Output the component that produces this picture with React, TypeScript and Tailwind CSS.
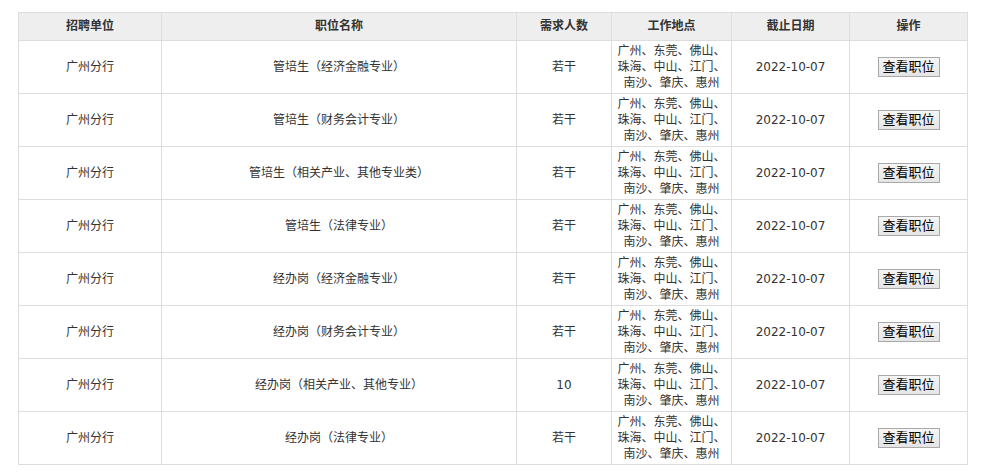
import React from 'react'

type Job = { unit: string; name: string; count: string; place: string; date: string }

const place = '广州、东莞、佛山、珠海、中山、江门、南沙、肇庆、惠州'

const jobs: Job[] = [
  { unit: '广州分行', name: '管培生（经济金融专业）', count: '若干', place, date: '2022-10-07' },
  { unit: '广州分行', name: '管培生（财务会计专业）', count: '若干', place, date: '2022-10-07' },
  { unit: '广州分行', name: '管培生（相关产业、其他专业类）', count: '若干', place, date: '2022-10-07' },
  { unit: '广州分行', name: '管培生（法律专业）', count: '若干', place, date: '2022-10-07' },
  { unit: '广州分行', name: '经办岗（经济金融专业）', count: '若干', place, date: '2022-10-07' },
  { unit: '广州分行', name: '经办岗（财务会计专业）', count: '若干', place, date: '2022-10-07' },
  { unit: '广州分行', name: '经办岗（相关产业、其他专业）', count: '10', place, date: '2022-10-07' },
  { unit: '广州分行', name: '经办岗（法律专业）', count: '若干', place, date: '2022-10-07' },
]

const heads = ['招聘单位', '职位名称', '需求人数', '工作地点', '截止日期', '操作']

export default function App() {
  return (
    <div className="min-h-[474px] bg-white pt-[12px] pl-[18px] text-[12px] text-[#333] font-['DejaVu_Sans','Noto_Sans_CJK_SC',sans-serif]">
      <table className="w-[949px] table-fixed border-collapse border border-[#dddddd]">
        <colgroup>
          <col className="w-[143px]" />
          <col className="w-[355px]" />
          <col className="w-[95px]" />
          <col className="w-[120px]" />
          <col className="w-[118px]" />
          <col className="w-[118px]" />
        </colgroup>
        <thead>
          <tr className="bg-[#eeeeee]">
            {heads.map(h => (
              <th key={h} className="border border-[#dddddd] py-[5px] leading-[17px] font-bold text-center">{h}</th>
            ))}
          </tr>
        </thead>
        <tbody>
          {jobs.map((j, i) => (
            <tr key={i}>
              <td className="border border-[#dddddd] py-[2px] leading-[16px] text-center">{j.unit}</td>
              <td className="border border-[#dddddd] py-[2px] leading-[16px] text-center">{j.name}</td>
              <td className="border border-[#dddddd] py-[2px] leading-[16px] text-center">{j.count}</td>
              <td className="border border-[#dddddd] py-[2px] px-[5px] leading-[16px] text-center">{j.place}</td>
              <td className="border border-[#dddddd] py-[2px] leading-[16px] text-center">{j.date}</td>
              <td className="border border-[#dddddd] py-[2px] leading-[16px] text-center">
                <button className="h-[20px] w-[62px] border border-[#a9a9a9] bg-[linear-gradient(#f6f6f6,#e4e4e4)] text-[13px] leading-[18px] text-black">查看职位</button>
              </td>
            </tr>
          ))}
        </tbody>
      </table>
    </div>
  )
}
